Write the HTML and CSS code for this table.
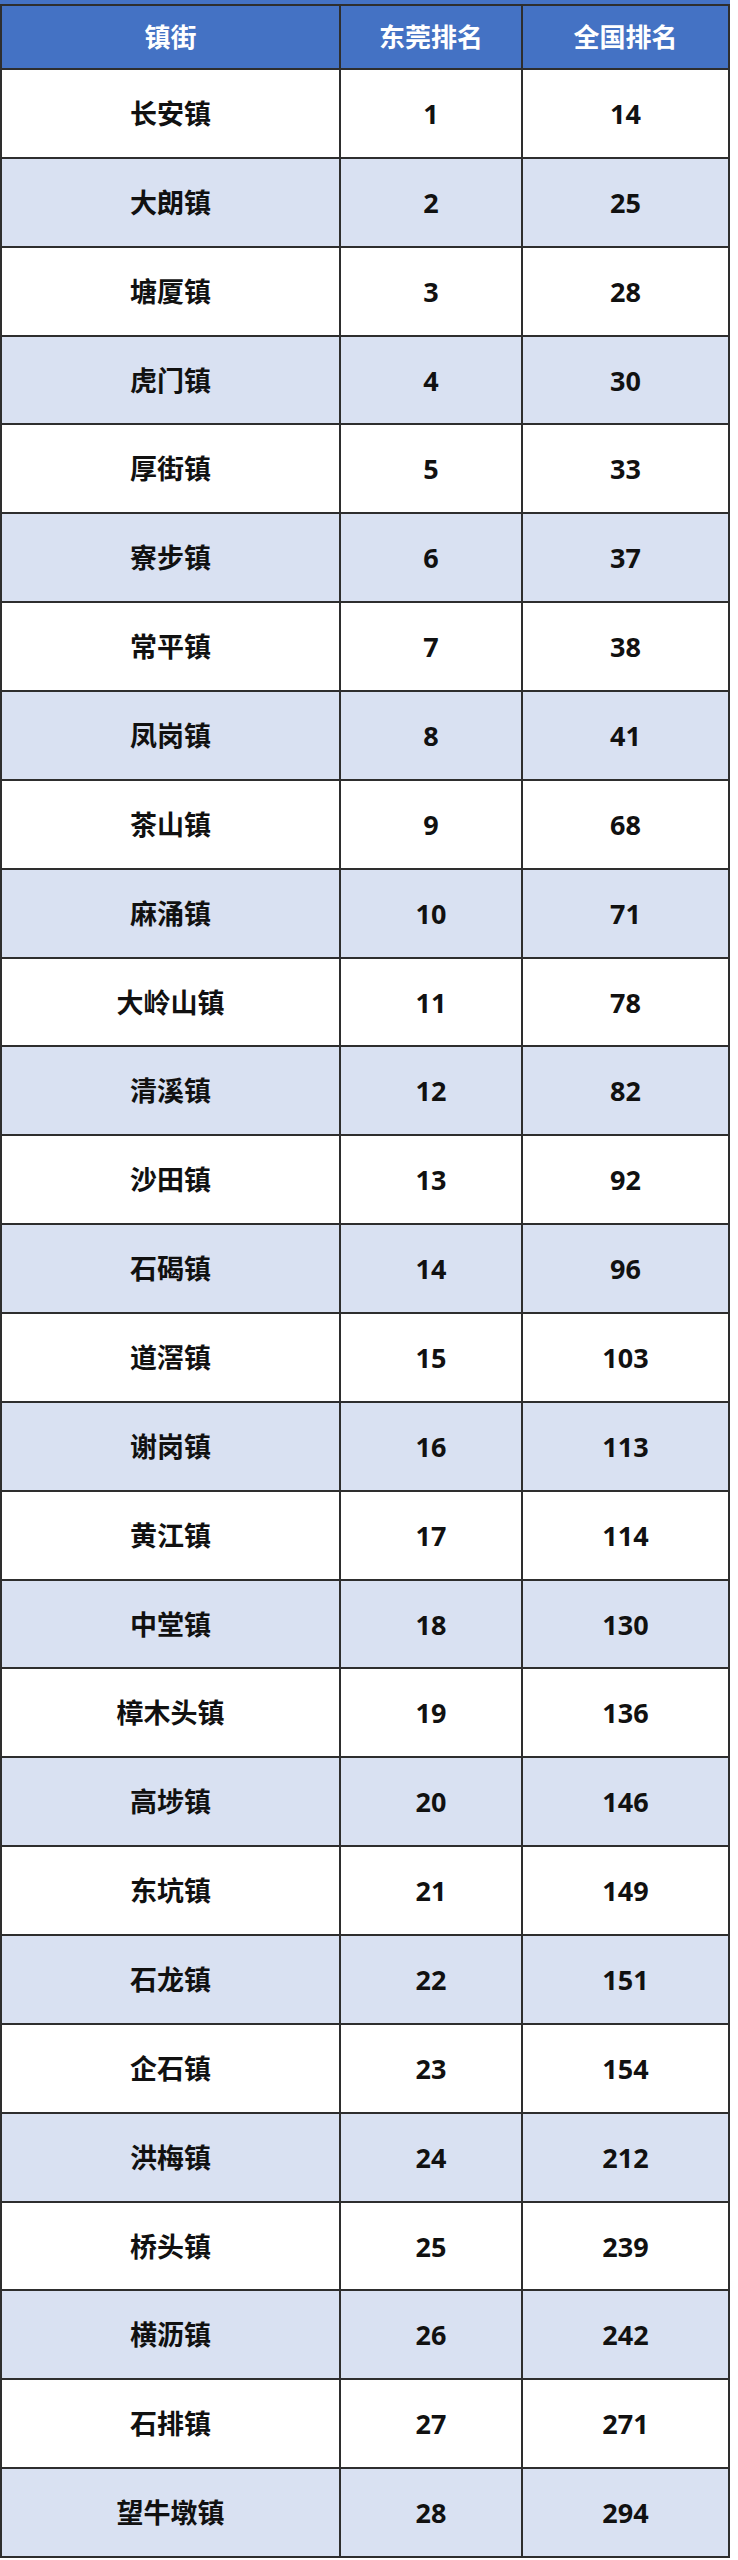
FILE: index.html
```html
<!DOCTYPE html>
<html lang="zh-CN">
<head>
<meta charset="utf-8">
<title>东莞镇街排名</title>
<link rel="stylesheet" href="styles.css">
</head>
<body>
<div class="sheet">
  <div class="prev-row"></div>
  <div class="grid">
    <div class="row head"><div class="cell">镇街</div><div class="cell">东莞排名</div><div class="cell">全国排名</div></div>
    <div class="row"><div class="cell">长安镇</div><div class="cell">1</div><div class="cell">14</div></div>
    <div class="row"><div class="cell">大朗镇</div><div class="cell">2</div><div class="cell">25</div></div>
    <div class="row"><div class="cell">塘厦镇</div><div class="cell">3</div><div class="cell">28</div></div>
    <div class="row"><div class="cell">虎门镇</div><div class="cell">4</div><div class="cell">30</div></div>
    <div class="row"><div class="cell">厚街镇</div><div class="cell">5</div><div class="cell">33</div></div>
    <div class="row"><div class="cell">寮步镇</div><div class="cell">6</div><div class="cell">37</div></div>
    <div class="row"><div class="cell">常平镇</div><div class="cell">7</div><div class="cell">38</div></div>
    <div class="row"><div class="cell">凤岗镇</div><div class="cell">8</div><div class="cell">41</div></div>
    <div class="row"><div class="cell">茶山镇</div><div class="cell">9</div><div class="cell">68</div></div>
    <div class="row"><div class="cell">麻涌镇</div><div class="cell">10</div><div class="cell">71</div></div>
    <div class="row"><div class="cell">大岭山镇</div><div class="cell">11</div><div class="cell">78</div></div>
    <div class="row"><div class="cell">清溪镇</div><div class="cell">12</div><div class="cell">82</div></div>
    <div class="row"><div class="cell">沙田镇</div><div class="cell">13</div><div class="cell">92</div></div>
    <div class="row"><div class="cell">石碣镇</div><div class="cell">14</div><div class="cell">96</div></div>
    <div class="row"><div class="cell">道滘镇</div><div class="cell">15</div><div class="cell">103</div></div>
    <div class="row"><div class="cell">谢岗镇</div><div class="cell">16</div><div class="cell">113</div></div>
    <div class="row"><div class="cell">黄江镇</div><div class="cell">17</div><div class="cell">114</div></div>
    <div class="row"><div class="cell">中堂镇</div><div class="cell">18</div><div class="cell">130</div></div>
    <div class="row"><div class="cell">樟木头镇</div><div class="cell">19</div><div class="cell">136</div></div>
    <div class="row"><div class="cell">高埗镇</div><div class="cell">20</div><div class="cell">146</div></div>
    <div class="row"><div class="cell">东坑镇</div><div class="cell">21</div><div class="cell">149</div></div>
    <div class="row"><div class="cell">石龙镇</div><div class="cell">22</div><div class="cell">151</div></div>
    <div class="row"><div class="cell">企石镇</div><div class="cell">23</div><div class="cell">154</div></div>
    <div class="row"><div class="cell">洪梅镇</div><div class="cell">24</div><div class="cell">212</div></div>
    <div class="row"><div class="cell">桥头镇</div><div class="cell">25</div><div class="cell">239</div></div>
    <div class="row"><div class="cell">横沥镇</div><div class="cell">26</div><div class="cell">242</div></div>
    <div class="row"><div class="cell">石排镇</div><div class="cell">27</div><div class="cell">271</div></div>
    <div class="row"><div class="cell">望牛墩镇</div><div class="cell">28</div><div class="cell">294</div></div>
  </div>
</div>
</body>
</html>
```
FILE: styles.css
```css
html, body {
  margin: 0;
  padding: 0;
  background: #ffffff;
}

.sheet {
  width: 730px;
}

.prev-row {
  height: 4px;
  background: #4472c4;
}

.grid {
  display: grid;
  grid-template-columns: 337px 180px 205px;
  grid-template-rows: 62px repeat(28, 86.86px);
  gap: 2px;
  padding: 2px;
  background: #2e2e2e;
  font-family: "Noto Sans", "Noto Sans CJK SC", sans-serif;
}

.row {
  display: contents;
}

.cell {
  display: flex;
  align-items: center;
  justify-content: center;
  background: #ffffff;
  color: #111111;
  font-size: 27px;
  font-weight: 700;
  line-height: 1;
}

.row:nth-child(odd) .cell {
  background: #d9e1f2;
}

.row.head .cell {
  background: #4472c4;
  color: #ffffff;
  font-size: 26px;
}
```
